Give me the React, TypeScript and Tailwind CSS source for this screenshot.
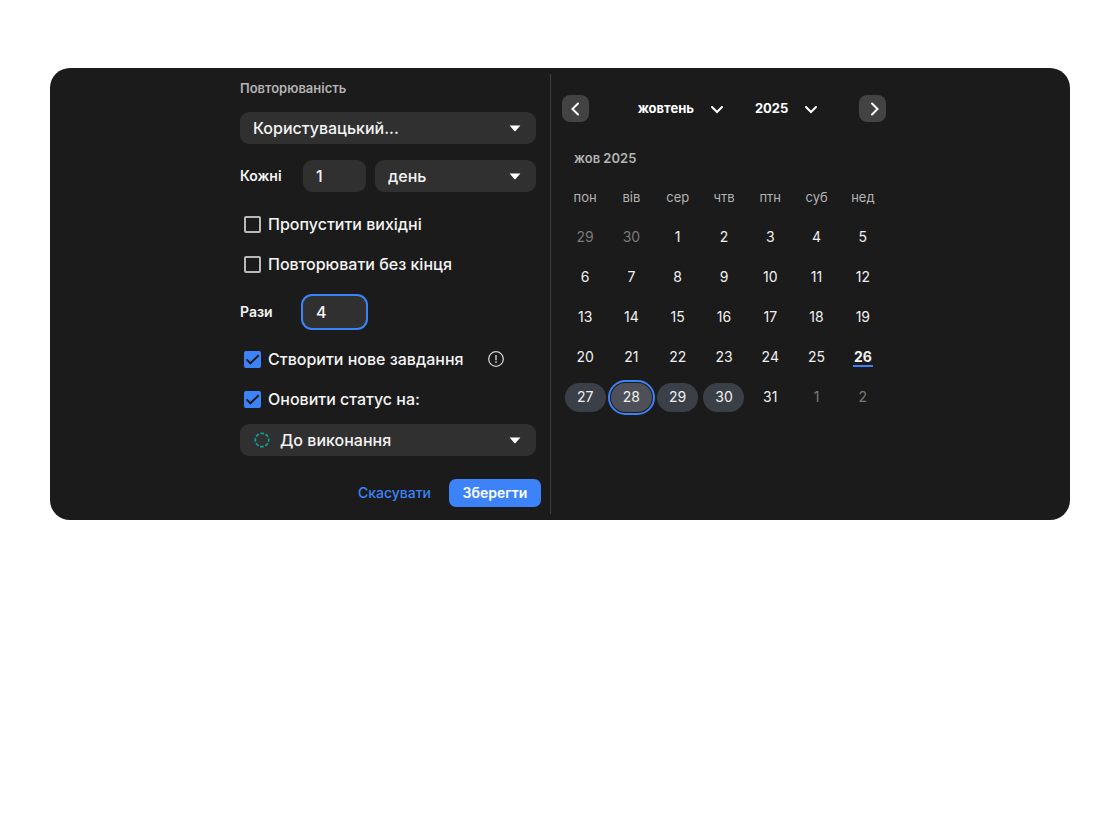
import { useState } from "react";
import type { ReactNode } from "react";

type Day = { n: number; muted?: boolean; today?: boolean; range?: boolean; focus?: boolean };

const weekdays = ["пон", "вів", "сер", "чтв", "птн", "суб", "нед"];

const days: Day[] = [
  { n: 29, muted: true },
  { n: 30, muted: true },
  ...Array.from({ length: 31 }, (_, i) => ({
    n: i + 1,
    today: i + 1 === 26,
    range: i + 1 >= 27 && i + 1 <= 30,
    focus: i + 1 === 28,
  })),
  { n: 1, muted: true },
  { n: 2, muted: true },
];

const weeks = [0, 1, 2, 3, 4].map((w) => days.slice(w * 7, w * 7 + 7));

function Caret() {
  return (
    <svg
      aria-hidden="true"
      viewBox="0 0 12 7"
      className="pointer-events-none absolute top-[13px] right-[15px] h-[7px] w-3"
    >
      <path d="M.6.6h10.8L6.6 6Q6 6.600 5.400 6Z" fill="#fff" />
    </svg>
  );
}

function Dropdown({ label, value, icon, className }: { label: string; value: string; icon?: ReactNode; className: string }) {
  return (
    <div className={"relative " + className}>
      {icon}
      <select
        aria-label={label}
        className={
          "block h-8 w-full appearance-none rounded-[9px] bg-[#303030] pr-9 text-base font-medium text-[#f4f4f4] outline-none " +
          (icon ? "pl-10" : "pl-[13px]")
        }
      >
        <option>{value}</option>
      </select>
      <Caret />
    </div>
  );
}

function Check({ label, initial = false }: { label: string; initial?: boolean }) {
  const [on, setOn] = useState(initial);
  return (
    <label className="flex h-6 items-center gap-[7px] pl-1 text-base font-medium text-[#f4f4f4]">
      <span className="grid size-[17px]">
        <input
          type="checkbox"
          checked={on}
          onChange={(e) => setOn(e.target.checked)}
          className="col-start-1 row-start-1 size-[17px] appearance-none rounded-[2px] border-2 border-[#b9b9b9] checked:border-[#3c83f9] checked:bg-[#3c83f9]"
        />
        {on && (
          <svg aria-hidden="true" viewBox="0 0 17 17" className="pointer-events-none col-start-1 row-start-1 size-[17px]">
            <path d="M2.500 8.400 6.400 12.300 14.700 4.200" fill="none" stroke="#1b1b1b" strokeWidth="2" />
          </svg>
        )}
      </span>
      {label}
    </label>
  );
}

function Chevron({ d, className }: { d: string; className: string }) {
  return (
    <svg aria-hidden="true" viewBox="0 0 14 14" className={className}>
      <path d={d} fill="none" stroke="#fff" strokeWidth="2" strokeLinecap="round" strokeLinejoin="miter" />
    </svg>
  );
}

function NumberInput({ id, value, active = false }: { id: string; value: string; active?: boolean }) {
  return (
    <input
      id={id}
      defaultValue={value}
      inputMode="numeric"
      className={
        "h-8 w-[63px] rounded-[9px] bg-[#303030] px-[13px] text-base font-medium text-[#f4f4f4] outline-none " +
        (active ? "ring-2 ring-[#3c83f9]" : "")
      }
    />
  );
}

function RepeatForm() {
  return (
    <form className="w-[310px] shrink-0 pt-[10px] pb-[13px]" onSubmit={(e) => e.preventDefault()}>
      <h2 className="mb-[14px] text-[13px] leading-5 font-semibold text-[#b4b4b4]">Повторюваність</h2>
      <Dropdown label="Повторюваність" value="Користувацький..." className="w-[296px]" />
      <div className="mt-4 flex h-8 items-center">
        <label htmlFor="every" className="w-[63px] text-sm font-semibold text-[#f4f4f4]">
          Кожні
        </label>
        <NumberInput id="every" value="1" />
        <Dropdown label="Одиниця" value="день" className="ml-[9px] w-[161px]" />
      </div>
      <div className="mt-5 flex flex-col gap-4">
        <Check label="Пропустити вихідні" />
        <Check label="Повторювати без кінця" />
      </div>
      <div className="mt-5 flex h-8 items-center">
        <label htmlFor="times" className="w-[63px] text-sm font-semibold text-[#f4f4f4]">
          Рази
        </label>
        <NumberInput id="times" value="4" active />
      </div>
      <div className="mt-[19px] flex flex-col gap-4">
        <div className="flex w-[264px] items-center justify-between">
          <Check label="Створити нове завдання" initial />
          <svg aria-hidden="true" viewBox="0 0 16 16" className="size-4">
            <circle cx="8" cy="8" r="7.300" fill="none" stroke="#d0d0d0" strokeWidth="1.300" />
            <path d="M8 4v5.300M8 10.300v1.700" stroke="#b0b0b0" strokeWidth="1.700" />
          </svg>
        </div>
        <Check label="Оновити статус на:" initial />
      </div>
      <Dropdown
        label="Статус"
        value="До виконання"
        className="mt-[13px] w-[296px]"
        icon={
          <svg aria-hidden="true" viewBox="0 0 16 16" className="pointer-events-none absolute top-2 left-[14px] size-4">
            <circle cx="8" cy="8" r="6.700" fill="none" stroke="#169c93" strokeWidth="1.700" strokeDasharray="3.700 1.562" strokeDashoffset="1.850" />
          </svg>
        }
      />
      <div className="mt-[23px] flex h-7 w-[301px] items-center justify-end gap-[18px] text-sm">
        <button type="button" className="font-medium text-[#3c83f9]">
          Скасувати
        </button>
        <button type="submit" className="h-7 w-[92px] rounded-[7px] bg-[#3c83f9] font-semibold text-white">
          Зберегти
        </button>
      </div>
    </form>
  );
}

function DayButton({ day }: { day: Day }) {
  const tone = day.muted ? "text-[#7a7a7a]" : "text-[#f0f0f0]";
  const fill = day.focus
    ? "bg-[#4d5059] outline-2 outline-offset-1 outline-[#3c83f9]"
    : day.range
      ? "bg-[#3b3f48]"
      : "";
  return (
    <button type="button" className={"mx-auto grid h-[29px] w-[41px] place-items-center rounded-[15px] text-sm " + tone + " " + fill}>
      {day.today ? (
        <span className="border-y-2 border-t-transparent border-b-[#3c83f9] px-px leading-4 font-bold">{day.n}</span>
      ) : (
        day.n
      )}
    </button>
  );
}

function Calendar() {
  return (
    <section className="ml-[11px] w-[324px] shrink-0 pt-[27px]">
      <div className="flex h-[27px] items-center justify-between">
        <button type="button" aria-label="Попередній місяць" className="grid size-[27px] place-items-center rounded-lg bg-[#434343]">
          <Chevron d="M9 1.500 3.500 7 9 12.500" className="size-[14px]" />
        </button>
        <div className="flex items-center gap-[31px] pl-2 text-[13px] font-bold text-white">
          <button type="button" className="flex items-center gap-4">
            жовтень
            <Chevron d="M2 5 7 10 12 5" className="size-[14px]" />
          </button>
          <button type="button" className="flex items-center gap-4">
            2025
            <Chevron d="M2 5 7 10 12 5" className="size-[14px]" />
          </button>
        </div>
        <button type="button" aria-label="Наступний місяць" className="grid size-[27px] place-items-center rounded-lg bg-[#434343]">
          <Chevron d="M6 1.500 11.500 7 6 12.500" className="size-[14px]" />
        </button>
      </div>
      <h3 className="mt-[26px] pl-3 text-[13px] leading-5 font-semibold text-[#b4b4b4]">жов 2025</h3>
      <table className="mt-[10px] w-full table-fixed text-center">
        <thead>
          <tr className="h-[39px]">
            {weekdays.map((d) => (
              <th key={d} scope="col" className="p-0 text-[13px] font-normal text-[#b4b4b4]">
                {d}
              </th>
            ))}
          </tr>
        </thead>
        <tbody>
          {weeks.map((week, i) => (
            <tr key={i} className="h-10">
              {week.map((day, j) => (
                <td key={j} className="p-0">
                  <DayButton day={day} />
                </td>
              ))}
            </tr>
          ))}
        </tbody>
      </table>
    </section>
  );
}

export default function App() {
  return (
    <main className="min-h-screen bg-white px-12 pt-[68px] font-['Inter',sans-serif]">
      <div className="ml-[2px] flex rounded-[20px] bg-[#1b1b1b] pl-[190px]">
        <RepeatForm />
        <div className="my-[6px] w-px bg-[#3d3d3d]" />
        <Calendar />
      </div>
    </main>
  );
}
